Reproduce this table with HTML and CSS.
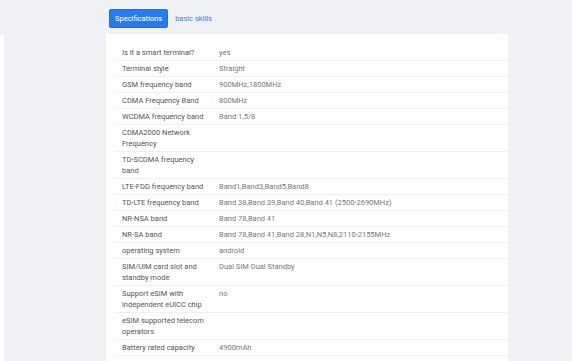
FILE: index.html
```html
<!DOCTYPE html>
<html lang="en">

<head>
    <meta charset="UTF-8">
    <meta name="viewport" content="width=device-width, initial-scale=1.0">
    <title>Specifications</title>
    <link rel="stylesheet" href="styles.css">
</head>

<body>
    <!-- Tabs -->
    <div class="tabs">
        <button class="tab active">Specifications</button>
        <button class="tab">basic skills</button>
    </div>

    <!-- Main -->
    <div class="main">
        <div class="edge"></div>
        <div class="card">
            <table class="specs">
                <tr><td class="label">Is it a smart terminal?</td><td class="value">yes</td></tr>
                <tr><td class="label">Terminal style</td><td class="value">Straight</td></tr>
                <tr><td class="label">GSM frequency band</td><td class="value">900MHz,1800MHz</td></tr>
                <tr><td class="label">CDMA Frequency Band</td><td class="value">800MHz</td></tr>
                <tr><td class="label">WCDMA frequency band</td><td class="value">Band 1,5/8</td></tr>
                <tr><td class="label">CDMA2000 Network Frequency</td><td class="value"></td></tr>
                <tr><td class="label">TD-SCDMA frequency band</td><td class="value"></td></tr>
                <tr><td class="label">LTE-FDD frequency band</td><td class="value">Band1,Band3,Band5,Band8</td></tr>
                <tr><td class="label">TD-LTE frequency band</td><td class="value">Band 38,Band 39,Band 40,Band 41 (2500-2690MHz)</td></tr>
                <tr><td class="label">NR-NSA band</td><td class="value">Band 78,Band 41</td></tr>
                <tr><td class="label">NR-SA band</td><td class="value">Band 78,Band 41,Band 28,N1,N5,N8,2110-2155MHz</td></tr>
                <tr><td class="label">operating system</td><td class="value">android</td></tr>
                <tr><td class="label">SIM/UIM card slot and standby mode</td><td class="value">Dual SIM Dual Standby</td></tr>
                <tr><td class="label">Support eSIM with independent eUICC chip</td><td class="value">no</td></tr>
                <tr><td class="label">eSIM supported telecom operators</td><td class="value"></td></tr>
                <tr><td class="label">Battery rated capacity</td><td class="value">4900mAh</td></tr>
            </table>
        </div>
    </div>
</body>

</html>
```

FILE: styles.css
```css
body {
    font-family: Roboto, 'Liberation Sans', Arial, sans-serif;
    margin: 0;
    padding: 0;
    background: #f0f1f4;
    color: #555;
}

.tabs {
    display: flex;
    align-items: center;
    gap: 1px;
    height: 34px;
    padding: 0 0 0 109px;
    box-sizing: border-box;
}

.tab {
    font-family: inherit;
    font-size: 7.5px;
    height: 19px;
    padding: 0 5px;
    margin-top: 2px;
    border: 1px solid transparent;
    border-radius: 2px;
    background: none;
    color: #3b80e0;
    cursor: pointer;
}

.tab.active {
    background: #2b7be6;
    border-color: #1f6fd9;
    color: #fff;
}

.main {
    display: flex;
    align-items: flex-start;
}

.edge {
    width: 4px;
    height: 330px;
    margin-top: 1px;
    background: #fff;
}

.card {
    margin-left: 102px;
    width: 402px;
    padding: 11px 0 0 8px;
    box-sizing: border-box;
    background: #fff;
    min-height: 330px;
}

.specs {
    width: 100%;
    border-collapse: collapse;
    font-size: 7.5px;
    line-height: 11px;
}

.specs td {
    padding: 2px 0 2px 8px;
    border-bottom: 1px solid #eef0f4;
    vertical-align: top;
}

.specs .label {
    width: 89px;
    color: #555;
}

.specs .value {
    color: #777;
}
```
